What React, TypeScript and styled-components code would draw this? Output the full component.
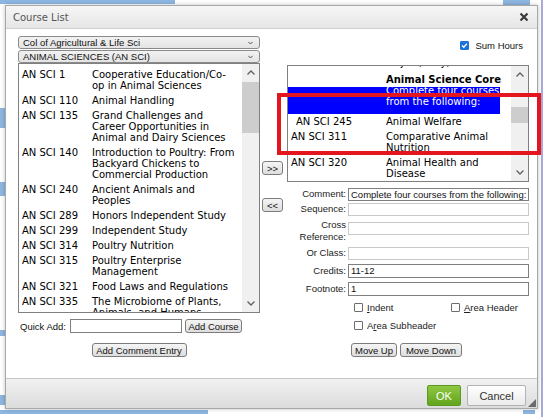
import React from "react";
import styled, { createGlobalStyle } from "styled-components";

const GlobalStyle = createGlobalStyle`
  html, body {
    margin: 0;
    padding: 0;
    background: #fff;
    overflow: hidden;
  }
`;

const Screen = styled.div`
  position: relative;
  width: 549px;
  height: 417px;
  overflow: hidden;
  font-family: "Liberation Sans", Arial, sans-serif;
`;

/* page behind the modal */
const Backdrop = styled.div`
  width: 541px;
  height: 417px;
  border-right: 2px solid #a9a9dc;
  display: flex;
  flex-direction: column;
`;

const Strip = styled.div<{ $h: number }>`
  display: flex;
  height: ${(p) => p.$h}px;
  flex: none;
`;

const Patch = styled.div<{ $w: number; $h: number; $ml?: number; $mt?: number }>`
  width: ${(p) => p.$w}px;
  height: ${(p) => p.$h}px;
  margin-left: ${(p) => p.$ml || 0}px;
  margin-top: ${(p) => p.$mt || 0}px;
  background: #8db6e0;
  flex: none;
`;

const SideStrip = styled.div`
  flex: 1;
  display: flex;
  flex-direction: column;
  width: 5px;
`;

/* modal */
const Dialog = styled.div`
  position: absolute;
  left: 5px;
  top: 5px;
  width: 533px;
  height: 404px;
  box-sizing: border-box;
  border: 1px solid #a8a8a8;
  background: #fff;
  box-shadow: 0 0 4px rgba(0, 0, 0, 0.25);
  display: flex;
  flex-direction: column;
`;

const TitleBar = styled.div`
  height: 22px;
  flex: none;
  display: flex;
  align-items: center;
  justify-content: space-between;
  padding: 0 8px 0 7px;
  background: linear-gradient(#f6f6f6, #e6e6e6);
  border-bottom: 1px solid #cfcfcf;
  font-family: "DejaVu Sans", Verdana, sans-serif;
  font-size: 10px;
  color: #555;
`;

const Body = styled.div`
  flex: 1;
  display: flex;
  padding: 7px 8px 0 12px;
  font-size: 9.5px;
  color: #111;
`;

const Column = styled.div<{ $w: number; $ml?: number }>`
  width: ${(p) => p.$w}px;
  margin-left: ${(p) => p.$ml || 0}px;
  display: flex;
  flex-direction: column;
  flex: none;
`;

const Select = styled.div<{ $mt?: number }>`
  height: 13px;
  margin-top: ${(p) => p.$mt || 0}px;
  box-sizing: border-box;
  border: 1px solid #8a8a8a;
  border-radius: 3px;
  background: linear-gradient(#f2f2f2, #e4e4e4);
  padding: 0 6px 0 4px;
  display: flex;
  align-items: center;
  justify-content: space-between;
  line-height: 11px;
  white-space: nowrap;
`;

const ListBox = styled.div<{ $h: number; $mt?: number }>`
  height: ${(p) => p.$h}px;
  margin-top: ${(p) => p.$mt || 0}px;
  box-sizing: border-box;
  border: 1px solid #808080;
  display: flex;
  background: #fff;
  font-family: "DejaVu Sans", Verdana, sans-serif;
  font-size: 10px;
  color: #000;
`;

const ListContent = styled.div<{ $pt?: number }>`
  flex: 1;
  overflow: hidden;
  padding-top: ${(p) => p.$pt || 0}px;
`;

const Row = styled.div<{ $w?: number; $selected?: boolean; $clip?: boolean; $h?: number }>`
  display: flex;
  flex: none;
  width: ${(p) => (p.$w ? `${p.$w}px` : "auto")};
  padding: ${(p) => (p.$clip ? "0" : "2px 0")};
  height: ${(p) => (p.$h ? `${p.$h}px` : "auto")};
  overflow: ${(p) => (p.$clip ? "hidden" : "visible")};
  line-height: 11px;
  background: ${(p) => (p.$selected ? "#0000ff" : "transparent")};
  color: ${(p) => (p.$selected ? "#fff" : "#000")};
`;

const Code = styled.div<{ $w: number; $pl: number }>`
  width: ${(p) => p.$w}px;
  padding-left: ${(p) => p.$pl}px;
  box-sizing: border-box;
  white-space: nowrap;
  flex: none;
`;

const Title = styled.div<{ $bold?: boolean; $shift?: number }>`
  white-space: nowrap;
  font-weight: ${(p) => (p.$bold ? "bold" : "normal")};
  margin-top: ${(p) => p.$shift || 0}px;
`;

const Track = styled.div`
  width: 17px;
  flex: none;
  background: #f0f0f0;
  display: flex;
  flex-direction: column;
`;

const ArrowCell = styled.div`
  height: 17px;
  flex: none;
  display: flex;
  align-items: center;
  justify-content: center;
`;

const ThumbArea = styled.div`
  flex: 1;
  display: flex;
  flex-direction: column;
  align-items: center;
`;

const Thumb = styled.div<{ $top: number; $h: number }>`
  width: 17px;
  margin-top: ${(p) => p.$top}px;
  height: ${(p) => p.$h}px;
  background: #cdcdcd;
`;

const InlineRow = styled.div<{ $mt: number; $ml?: number; $center?: boolean; $gap?: number }>`
  display: flex;
  align-items: center;
  margin-top: ${(p) => p.$mt}px;
  margin-left: ${(p) => p.$ml || 0}px;
  justify-content: ${(p) => (p.$center ? "center" : "flex-start")};
  gap: ${(p) => p.$gap || 0}px;
`;

const Label = styled.span<{ $w?: number }>`
  width: ${(p) => (p.$w ? `${p.$w}px` : "auto")};
  white-space: nowrap;
  flex: none;
`;

const TextInput = styled.div<{ $w?: number; $h?: number; $light?: boolean; $mt?: number }>`
  width: ${(p) => (p.$w ? `${p.$w}px` : "auto")};
  flex: ${(p) => (p.$w ? "none" : "1")};
  height: ${(p) => p.$h || 13}px;
  margin-top: ${(p) => p.$mt || 0}px;
  box-sizing: border-box;
  border: 1px solid ${(p) => (p.$light ? "#c9c9c9" : "#7f7f7f")};
  background: #fff;
  padding-left: 2px;
  line-height: 11px;
  white-space: nowrap;
  overflow: hidden;
`;

const Button = styled.div<{ $w: number; $ml?: number }>`
  width: ${(p) => p.$w}px;
  margin-left: ${(p) => p.$ml || 0}px;
  height: 14px;
  box-sizing: border-box;
  border: 1px solid #7c7c7c;
  border-radius: 3px;
  background: linear-gradient(#f5f5f5, #dedede);
  display: flex;
  align-items: center;
  justify-content: center;
  white-space: nowrap;
  font-size: 9.5px;
  color: #111;
  flex: none;
`;

const MiddleColumn = styled.div`
  width: 21px;
  margin-left: 2px;
  padding-top: 125px;
  display: flex;
  flex-direction: column;
  gap: 23px;
  flex: none;
`;

const SumRow = styled.div`
  height: 11px;
  margin-top: 4px;
  padding-right: 6px;
  display: flex;
  align-items: center;
  justify-content: flex-end;
  gap: 6px;
`;

const Box = styled.span<{ $checked?: boolean }>`
  width: 9px;
  height: 9px;
  box-sizing: border-box;
  border: 1px solid ${(p) => (p.$checked ? "#1a73d9" : "#6b6b6b")};
  border-radius: 1px;
  background: ${(p) => (p.$checked ? "#1a73d9" : "#fff")};
  display: flex;
  align-items: center;
  justify-content: center;
  flex: none;
`;

const FormRow = styled.div<{ $mt: number; $h: number }>`
  display: flex;
  align-items: flex-start;
  height: ${(p) => p.$h}px;
  margin-top: ${(p) => p.$mt}px;
  gap: 2px;
`;

const FormLabel = styled.div<{ $pt?: number }>`
  width: 59px;
  flex: none;
  text-align: right;
  line-height: 12px;
  padding-top: ${(p) => p.$pt || 0}px;
  color: #222;
`;

const CheckGrid = styled.div`
  display: grid;
  grid-template-columns: 97px auto;
  row-gap: 7px;
  margin-top: 6px;
  margin-left: 67px;
`;

const CheckItem = styled.div`
  display: flex;
  align-items: center;
  gap: 4px;
  height: 11px;
  white-space: nowrap;
  color: #222;
`;

const Key = styled.span`
  text-decoration: underline;
`;

const Footer = styled.div`
  position: relative;
  height: 30px;
  flex: none;
  box-sizing: border-box;
  border-top: 1px solid #c8c8c8;
  background: linear-gradient(#f1f1f1, #dcdcdc);
  display: flex;
  justify-content: flex-end;
  align-items: flex-start;
  padding: 6px 11px 0 0;
  gap: 6px;
`;

const DialogButton = styled.div<{ $w: number; $primary?: boolean }>`
  width: ${(p) => p.$w}px;
  height: 21px;
  box-sizing: border-box;
  border-radius: 2px;
  border: 1px solid ${(p) => (p.$primary ? "#5a9a1e" : "#b3b3b3")};
  background: ${(p) =>
    p.$primary ? "linear-gradient(#8fc741, #62a41d)" : "linear-gradient(#ffffff, #ebebeb)"};
  color: ${(p) => (p.$primary ? "#fff" : "#333")};
  font-size: 11px;
  display: flex;
  align-items: center;
  justify-content: center;
`;

const Grip = styled.svg`
  position: absolute;
  right: 1px;
  bottom: 1px;
`;

const Annotation = styled.div`
  position: absolute;
  left: 277px;
  top: 93px;
  width: 264px;
  height: 62px;
  box-sizing: border-box;
  border: 4px solid #e3161f;
  pointer-events: none;
`;

const Chevron = ({ up }: { up?: boolean }) => (
  <svg width="8" height="5" viewBox="0 0 8 5">
    <polyline
      points={up ? "0.5,4.5 4,1 7.5,4.5" : "0.5,0.5 4,4 7.5,0.5"}
      fill="none"
      stroke="#606060"
      strokeWidth="1.3"
    />
  </svg>
);

const SmallChevron = () => (
  <svg width="5" height="4" viewBox="0 0 5 4">
    <polyline points="0.3,0.8 2.5,3 4.7,0.8" fill="none" stroke="#444" strokeWidth="0.9" />
  </svg>
);

const Scrollbar = ({ top, h }: { top: number; h: number }) => (
  <Track>
    <ArrowCell>
      <Chevron up />
    </ArrowCell>
    <ThumbArea>
      <Thumb $top={top} $h={h} />
    </ThumbArea>
    <ArrowCell>
      <Chevron />
    </ArrowCell>
  </Track>
);

const Check = ({ checked }: { checked?: boolean }) => (
  <Box $checked={checked}>
    {checked && (
      <svg width="7" height="7" viewBox="0 0 7 7">
        <polyline points="1,3.6 2.8,5.3 6,1.6" fill="none" stroke="#fff" strokeWidth="1.4" />
      </svg>
    )}
  </Box>
);

type Course = { code: string; lines: string[] };

const leftCourses: Course[] = [
  { code: "AN SCI 1", lines: ["Cooperative Education/Co-", "op in Animal Sciences"] },
  { code: "AN SCI 110", lines: ["Animal Handling"] },
  { code: "AN SCI 135", lines: ["Grand Challenges and", "Career Opportunities in", "Animal and Dairy Sciences"] },
  { code: "AN SCI 140", lines: ["Introduction to Poultry: From", "Backyard Chickens to", "Commercial Production"] },
  { code: "AN SCI 240", lines: ["Ancient Animals and", "Peoples"] },
  { code: "AN SCI 289", lines: ["Honors Independent Study"] },
  { code: "AN SCI 299", lines: ["Independent Study"] },
  { code: "AN SCI 314", lines: ["Poultry Nutrition"] },
  { code: "AN SCI 315", lines: ["Poultry Enterprise", "Management"] },
  { code: "AN SCI 321", lines: ["Food Laws and Regulations"] },
  { code: "AN SCI 335", lines: ["The Microbiome of Plants,", "Animals, and Humans"] },
];

const Lines = ({ lines }: { lines: string[] }) => (
  <>
    {lines.map((l, i) => (
      <div key={i}>{l}</div>
    ))}
  </>
);

export default function App() {
  return (
    <Screen>
      <GlobalStyle />
      <Backdrop>
        <Strip $h={5}>
          <Patch $w={175} $h={4} />
          <Patch $w={27} $h={5} $ml={328} />
        </Strip>
        <SideStrip>
          <Patch $w={5} $h={20} $mt={103} />
          <Patch $w={5} $h={14} $mt={54} />
          <Patch $w={5} $h={6} $mt={134} />
          <Patch $w={5} $h={10} $mt={59} />
        </SideStrip>
        <Strip $h={8}>
          <Patch $w={208} $h={4} $mt={1} />
          <Patch $w={12} $h={4} $ml={315} $mt={1} />
        </Strip>
      </Backdrop>

      <Dialog>
        <TitleBar>
          <span>Course List</span>
          <svg width="10" height="10" viewBox="0 0 10 10">
            <path d="M1.5 1.5 L8.5 8.5 M8.5 1.5 L1.5 8.5" stroke="#3a3a3a" strokeWidth="2.2" />
          </svg>
        </TitleBar>

        <Body>
          <Column $w={242}>
            <Select>
              Col of Agricultural &amp; Life Sci
              <SmallChevron />
            </Select>
            <Select $mt={1}>
              ANIMAL SCIENCES (AN SCI)
              <SmallChevron />
            </Select>
            <ListBox $h={250}>
              <ListContent $pt={3}>
                {leftCourses.map((c) => (
                  <Row key={c.code}>
                    <Code $w={73} $pl={3}>
                      {c.code}
                    </Code>
                    <Title>
                      <Lines lines={c.lines} />
                    </Title>
                  </Row>
                ))}
              </ListContent>
              <Scrollbar top={1} h={51} />
            </ListBox>
            <InlineRow $mt={6} $ml={2}>
              <Label $w={50}>Quick Add:</Label>
              <TextInput $w={112} $h={14} />
              <Button $w={57} $ml={3}>
                Add Course
              </Button>
            </InlineRow>
            <InlineRow $mt={10} $center>
              <Button $w={95}>Add Comment Entry</Button>
            </InlineRow>
          </Column>

          <MiddleColumn>
            <Button $w={21}>&gt;&gt;</Button>
            <Button $w={21}>&lt;&lt;</Button>
          </MiddleColumn>

          <Column $w={242} $ml={4}>
            <SumRow>
              <Check checked />
              <span>Sum Hours</span>
            </SumRow>
            <ListBox $h={117} $mt={14}>
              <ListContent>
                <Row $w={212} $clip $h={6}>
                  <Code $w={98} $pl={3} />
                  <Title $shift={-9}>Majors, only; see</Title>
                </Row>
                <Row $w={212}>
                  <Code $w={98} $pl={3} />
                  <Title $bold>Animal Science Core</Title>
                </Row>
                <Row $w={212} $selected $clip $h={27}>
                  <Code $w={98} $pl={3} />
                  <Title $shift={-2}>
                    <Lines lines={["Complete four courses", "from the following:"]} />
                  </Title>
                </Row>
                <Row $w={212}>
                  <Code $w={98} $pl={8}>
                    AN SCI 245
                  </Code>
                  <Title>Animal Welfare</Title>
                </Row>
                <Row $w={212}>
                  <Code $w={98} $pl={3}>
                    AN SCI 311
                  </Code>
                  <Title>
                    <Lines lines={["Comparative Animal", "Nutrition"]} />
                  </Title>
                </Row>
                <Row $w={212}>
                  <Code $w={98} $pl={3}>
                    AN SCI 320
                  </Code>
                  <Title>
                    <Lines lines={["Animal Health and", "Disease"]} />
                  </Title>
                </Row>
              </ListContent>
              <Scrollbar top={24} h={16} />
            </ListBox>

            <FormRow $mt={6} $h={13}>
              <FormLabel>Comment:</FormLabel>
              <TextInput>Complete four courses from the following:</TextInput>
            </FormRow>
            <FormRow $mt={2} $h={13}>
              <FormLabel>Sequence:</FormLabel>
              <TextInput $light />
            </FormRow>
            <FormRow $mt={3} $h={26}>
              <FormLabel>
                Cross
                <br />
                Reference:
              </FormLabel>
              <TextInput $light $mt={3} />
            </FormRow>
            <FormRow $mt={2} $h={13}>
              <FormLabel>Or Class:</FormLabel>
              <TextInput $light />
            </FormRow>
            <FormRow $mt={4} $h={14}>
              <FormLabel $pt={1}>Credits:</FormLabel>
              <TextInput $h={14}>11-12</TextInput>
            </FormRow>
            <FormRow $mt={4} $h={14}>
              <FormLabel $pt={1}>Footnote:</FormLabel>
              <TextInput $h={14}>1</TextInput>
            </FormRow>

            <CheckGrid>
              <CheckItem>
                <Check />
                <span>
                  <Key>I</Key>ndent
                </span>
              </CheckItem>
              <CheckItem>
                <Check />
                <span>
                  <Key>A</Key>rea Header
                </span>
              </CheckItem>
              <CheckItem>
                <Check />
                <span>
                  A<Key>r</Key>ea Subheader
                </span>
              </CheckItem>
            </CheckGrid>

            <InlineRow $mt={12} $ml={64} $gap={3}>
              <Button $w={46}>Move Up</Button>
              <Button $w={62}>Move Down</Button>
            </InlineRow>
          </Column>
        </Body>

        <Footer>
          <DialogButton $w={34} $primary>
            OK
          </DialogButton>
          <DialogButton $w={59}>Cancel</DialogButton>
          <Grip width="8" height="8" viewBox="0 0 8 8">
            <polygon points="8,0 8,8 0,8" fill="#6a6a6a" />
          </Grip>
        </Footer>
      </Dialog>

      <Annotation />
    </Screen>
  );
}
